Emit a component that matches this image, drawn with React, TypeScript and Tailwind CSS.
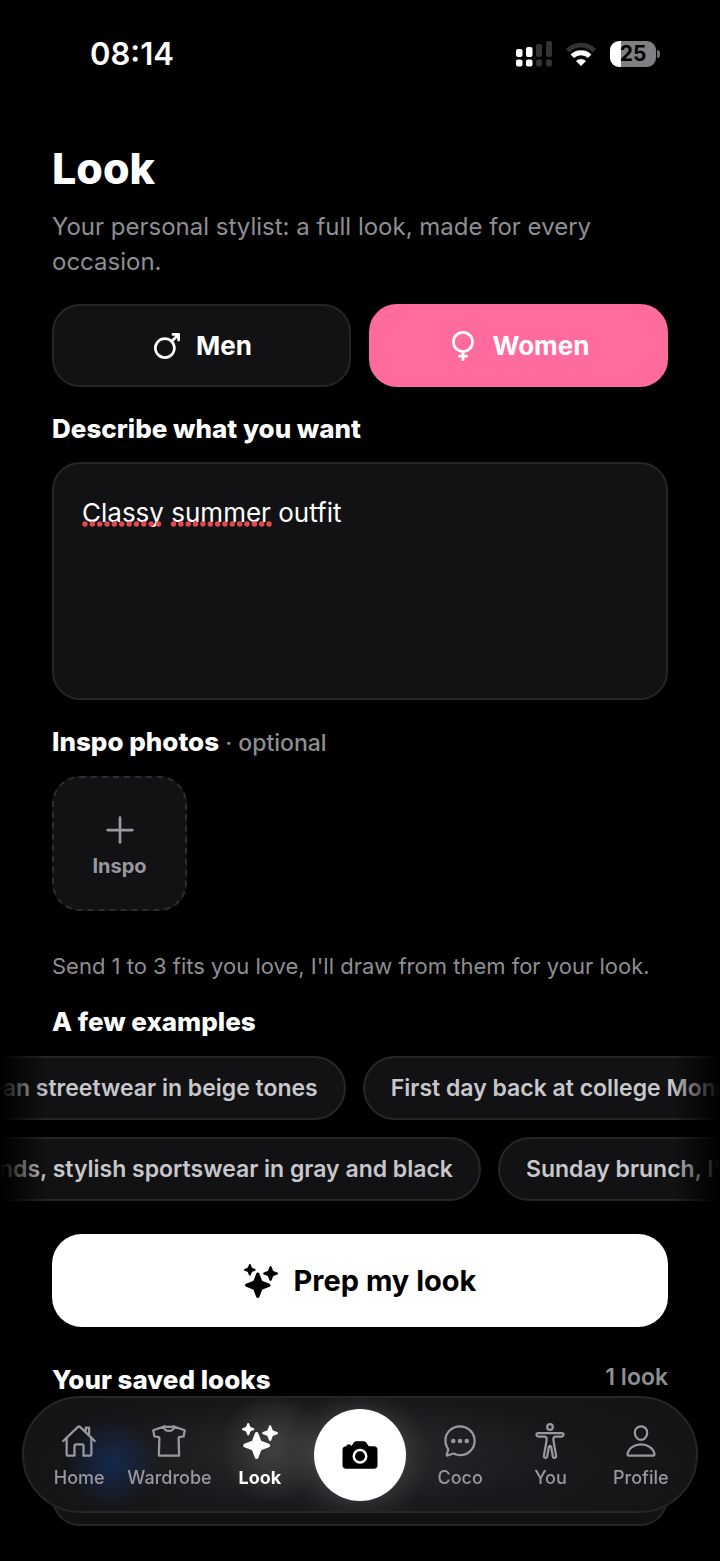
import { useState } from "react";
import {
  IoAdd, IoBodyOutline, IoCamera, IoChatbubbleEllipsesOutline, IoFemale,
  IoHomeOutline, IoMale, IoPersonOutline, IoShirtOutline, IoSparkles,
} from "react-icons/io5";
import { clsx } from "clsx";

type Gender = "men" | "women";

export default function App() {
  const [gender, setGender] = useState<Gender>("women");
  const [prompt, setPrompt] = useState("Classy summer outfit");

  return (
    <div className="min-h-screen overflow-x-hidden bg-black pb-[34px] font-['Inter','Liberation_Sans',sans-serif] text-white">
      <StatusBar/>

      <main>
        <div className="px-[52px] pt-[34px]">
          <h1 className="text-[43px] leading-[52px] font-extrabold">Look</h1>
          <p className="mt-[15px] text-[24px] leading-[35px] text-[#8e8e93]">
            Your personal stylist: a full look, made for every occasion.
          </p>

          {/* Gender switch */}
          <div className="mt-[25px] grid grid-cols-2 gap-[18px]">
            <GenderButton icon={IoMale} label="Men" active={gender === "men"} onClick={() => setGender("men")}/>
            <GenderButton icon={IoFemale} label="Women" active={gender === "women"} onClick={() => setGender("women")}/>
          </div>

          {/* Prompt */}
          <label htmlFor="prompt" className="mt-[25px] block text-[26px] leading-[34px] font-extrabold">Describe what you want</label>
          <div className="relative mt-4">
            <textarea id="prompt" value={prompt} onChange={e => setPrompt(e.target.value)} spellCheck={false}
              className="block h-[238px] w-full resize-none rounded-[28px] border-2 border-[#262629] bg-[#121214] px-7 py-8 text-[26px] leading-[34px] text-white outline-none"/>
            {prompt === "Classy summer outfit" && <SpellingMarks/>}
          </div>

          {/* Inspo photos */}
          <h2 className="mt-[25px] text-[26px] leading-[34px] font-extrabold">
            Inspo photos<span className="text-[23px] font-medium text-[#8e8e93]"> · optional</span>
          </h2>
          <button className="relative mt-4 flex size-[135px] flex-col items-center justify-center rounded-[28px] bg-[#121214] text-[#98989e]">
            <DashedFrame/>
            <IoAdd className="size-11"/>
            <span className="text-[20px] leading-7 font-bold">Inspo</span>
          </button>
          <p className="mt-10 text-[22px] leading-[30px] text-[#8e8e93]">
            Send 1 to 3 fits you love, I'll draw from them for your look.
          </p>

          <h2 className="mt-6 text-[26px] leading-[34px] font-extrabold">A few examples</h2>
        </div>

        {/* Example prompts, scrolled past the left edge */}
        <div className="relative mt-[17px] flex flex-col gap-[17px] overflow-hidden">
          <div className="-ml-[62px] flex gap-[17px]">
            <Chip text="Clean streetwear in beige tones" onPick={setPrompt}/>
            <Chip text="First day back at college Monday" onPick={setPrompt}/>
          </div>
          <div className="-ml-[71px] flex gap-[17px]">
            <Chip text="Friends, stylish sportswear in gray and black" onPick={setPrompt}/>
            <Chip text="Sunday brunch, I'm" onPick={setPrompt}/>
          </div>
          <div className="pointer-events-none absolute inset-y-0 left-0 w-12 bg-linear-to-r from-black to-transparent"/>
          <div className="pointer-events-none absolute inset-y-0 right-0 w-12 bg-linear-to-l from-black to-transparent"/>
        </div>

        <div className="px-[52px]">
          <button className="mt-[33px] flex h-[93px] w-full items-center justify-center gap-4 rounded-[30px] bg-white text-[29px] font-bold text-black">
            <IoSparkles className="size-[34px]"/>Prep my look
          </button>

          {/* Saved looks */}
          <div className="mt-9 flex justify-between leading-[34px]">
            <h2 className="text-[26px] font-extrabold">Your saved looks</h2>
            <span className="text-[23px] leading-7 font-semibold text-[#8e8e93]">1 look</span>
          </div>
          <div className="mt-4 h-[113px] rounded-[28px] border-2 border-[#262629] bg-[#121214]"/>
        </div>
      </main>

      <TabBar/>
    </div>
  );
}

// ── Status bar ────────────────────────────────────────────────────────────
function StatusBar() {
  return (
    <header className="flex h-[108px] items-center justify-between pr-[60px] pl-[90px]">
      <time className="text-[31px] leading-9 font-semibold">08:14</time>
      <div className="flex items-center gap-[14px]">
        <svg viewBox="0 0 36 26" className="h-[26px] w-9" aria-hidden="true">
          <g fill="#fff">
            <rect x="0" y="8" width="6.5" height="8" rx="2"/>
            <rect x="10" y="6" width="6.5" height="10" rx="2"/>
            <rect x="0" y="18.5" width="6.5" height="7" rx="2"/>
            <rect x="10" y="18.5" width="6.5" height="7" rx="2"/>
          </g>
          <g fill="#333">
            <rect x="20" y="3" width="6" height="13" rx="2"/>
            <rect x="30" y="0" width="6" height="16" rx="2"/>
            <rect x="20" y="18.5" width="6" height="7" rx="2"/>
            <rect x="30" y="18.5" width="6" height="7" rx="2"/>
          </g>
        </svg>
        <svg viewBox="0 0 30 24" className="h-6 w-[30px]" fill="none" aria-hidden="true">
          <path d="M1.5 8.800a19 19 0 0 1 27 0" stroke="#333" strokeWidth="4.6"/>
          <path d="M6.3 14.3a12.2 12.2 0 0 1 17.4 0" stroke="#fff" strokeWidth="5"/>
          <path d="M15 24l-5-5a7 7 0 0 1 10 0z" fill="#fff"/>
        </svg>
        <div className="flex items-center gap-px">
          <div className="flex h-[26px] w-[46px] items-center justify-center rounded-[9px] bg-linear-to-r from-white from-25% to-[#808080] to-25% text-[21px] leading-[26px] font-bold text-black">25</div>
          <span className="h-2 w-[3px] rounded-r-full bg-[#707070]"/>
        </div>
      </div>
    </header>
  );
}

// ── Gender button ─────────────────────────────────────────────────────────
function GenderButton({ icon: Icon, label, active, onClick }: { icon: React.ElementType; label: string; active: boolean; onClick: () => void }) {
  return (
    <button onClick={onClick} aria-pressed={active}
      className={clsx(
        "flex h-[83px] items-center justify-center gap-[13px] rounded-[28px] border-2 text-[26px] font-bold",
        active ? "border-[#ff6b9d] bg-[#ff6b9d]" : "border-[#262629] bg-[#121214]"
      )}>
      <Icon className="size-8"/>{label}
    </button>
  );
}

// ── Dotted marks under the flagged words ──────────────────────────────────
function SpellingMarks() {
  return (
    <svg className="pointer-events-none absolute top-[58px] left-[30px] h-2 w-[200px]" viewBox="0 0 200 8"
      stroke="#e5484d" strokeWidth="5.4" strokeLinecap="round" aria-hidden="true">
      <path d="M3 4H77" strokeDasharray="0 7.35"/>
      <path d="M91.5 4H188" strokeDasharray="0 7.35"/>
    </svg>
  );
}

function DashedFrame() {
  return (
    <svg className="absolute inset-0 size-full" viewBox="0 0 135 135" fill="none" aria-hidden="true">
      <rect x="1" y="1" width="133" height="133" rx="27" stroke="#2e2e31" strokeWidth="2" strokeDasharray="6 5"/>
    </svg>
  );
}

function Chip({ text, onPick }: { text: string; onPick: (text: string) => void }) {
  return (
    <button onClick={() => onPick(text)}
      className="h-16 shrink-0 rounded-full border-2 border-[#262629] bg-[#121214] px-[26px] text-[23px] font-semibold whitespace-nowrap text-[#c7c7cc]">
      {text}
    </button>
  );
}

// ── Tab bar ───────────────────────────────────────────────────────────────
function TabBar() {
  return (
    <nav className="fixed inset-x-[22px] bottom-12 flex h-[117px] items-center overflow-hidden rounded-full border-2 border-[#262629] bg-[#141417] bg-[radial-gradient(circle_44px_at_88px_65px,#14294d,transparent),radial-gradient(ellipse_52px_56px_at_37%_44%,#404043,transparent),radial-gradient(ellipse_240px_54px_at_46%_48%,#29292c,transparent),radial-gradient(ellipse_360px_100px_at_50%_60%,#1e1e22,transparent)] px-2.5">
      <Tab icon={IoHomeOutline} label="Home"/>
      <Tab icon={IoShirtOutline} label="Wardrobe"/>
      <Tab icon={IoSparkles} label="Look" active/>
      <div className="flex w-[110px] shrink-0 justify-center">
        <button aria-label="Take a photo" className="flex size-[92px] items-center justify-center rounded-full bg-white text-black shadow-[0_2px_32px_rgba(255,255,255,0.18)]">
          <IoCamera className="size-10"/>
        </button>
      </div>
      <Tab icon={IoChatbubbleEllipsesOutline} label="Coco"/>
      <Tab icon={IoBodyOutline} label="You"/>
      <Tab icon={IoPersonOutline} label="Profile"/>
    </nav>
  );
}

function Tab({ icon: Icon, label, active }: { icon: React.ElementType; label: string; active?: boolean }) {
  return (
    <a href="#" aria-current={active ? "page" : undefined}
      className={clsx(
        "flex min-w-0 flex-1 flex-col items-center gap-[7px] pt-1 text-[18px] leading-6",
        active ? "font-bold text-white" : "font-medium text-[#98989e]"
      )}>
      <Icon className="size-9"/>{label}
    </a>
  );
}
